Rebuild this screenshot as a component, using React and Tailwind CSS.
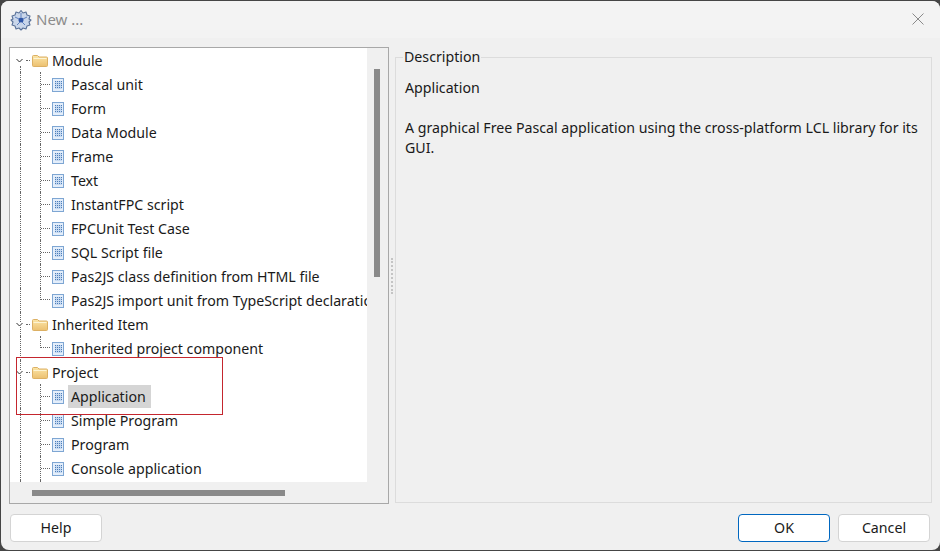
const font = { fontFamily: '"Noto Sans", "Open Sans", sans-serif' };

const FolderIcon = () => (
  <svg width="16" height="13" viewBox="0 0 16 13" className="shrink-0">
    <defs>
      <linearGradient id="folderFill" x1="0" y1="0" x2="0" y2="1">
        <stop offset="0" stopColor="#fbe6a8" />
        <stop offset="1" stopColor="#ecc070" />
      </linearGradient>
    </defs>
    <path d="M.5 2.5a1 1 0 0 1 1-1h4l1.5 1.5h7.5a1 1 0 0 1 1 1v7.5a1 1 0 0 1-1 1h-13a1 1 0 0 1-1-1z" fill="url(#folderFill)" stroke="#dcb064" />
    <path d="M1.5 4.5h13" stroke="#fdf4d3" />
  </svg>
);

const PageIcon = () => (
  <svg width="12" height="14" viewBox="0 0 12 14" className="mt-[1px] shrink-0">
    <rect x=".5" y=".5" width="11" height="13" fill="#e4eefa" stroke="#7ea6d3" />
    <rect x="3" y="3" width="7" height="8" fill="#c5d9f1" />
    {[3, 5, 7, 9].map((y) =>
      [3, 5, 7, 9].map((x) => <rect key={`${x}-${y}`} x={x} y={y} width="1" height="1" fill="#4d7db8" />)
    )}
  </svg>
);

const Chevron = () => (
  <svg width="7" height="5" viewBox="0 0 7 5" className="absolute left-[-4px] top-[10px] bg-white">
    <path d="M.5 1 3.5 4 6.5 1" fill="none" stroke="#333" />
  </svg>
);

const GroupRow = ({ label, first }) => (
  <div className="flex h-6 items-center">
    <div className="w-[10px] shrink-0" />
    <div className="relative flex h-full w-[12px] shrink-0 items-center">
      <div className={first ? "absolute left-0 top-[18px] h-[6px] border-l border-dotted border-[#666]" : "absolute left-0 top-0 h-full border-l border-dotted border-[#666]"} />
      <Chevron />
      <div className="ml-[6px] w-[4px] border-t border-dotted border-[#666]" />
    </div>
    <FolderIcon />
    <span className="ml-[4px] whitespace-nowrap pt-[1px]">{label}</span>
  </div>
);

const ItemRow = ({ label, last, selected }) => (
  <div className="flex h-6 items-center">
    <div className="w-[10px] shrink-0" />
    <div className="h-full w-[20px] shrink-0 border-l border-dotted border-[#666]" />
    <div className="flex h-full w-[12px] shrink-0 flex-col">
      <div className={last ? "h-1/2 w-[10px] border-b border-l border-dotted border-[#666]" : "flex h-full w-[10px] items-center border-l border-dotted border-[#666]"}>
        {!last && <div className="w-full border-t border-dotted border-[#666]" />}
      </div>
    </div>
    <PageIcon />
    <span className={selected ? "ml-[4px] flex h-[23px] items-center whitespace-nowrap bg-[#d5d5d5] pl-[3px] pr-[5px] pt-[1px]" : "ml-[4px] flex h-[23px] items-center whitespace-nowrap pl-[3px] pr-[2px] pt-[1px]"}>
      {label}
    </span>
  </div>
);

const Button = ({ children, primary }) => (
  <button className={primary ? "h-[28px] w-[92px] rounded-[4px] border border-[#0067c0] bg-white text-[14.2px] text-[#1a1a1a]" : "h-[28px] w-[92px] rounded-[4px] border border-[#d4d4d4] bg-white text-[14.2px] text-[#1a1a1a]"}>
    {children}
  </button>
);

export default function App() {
  return (
    <div style={font} className="relative h-[551px] w-[940px] overflow-hidden bg-[#454545] py-[1px] pl-[1px] text-[14.2px] text-[#1a1a1a]">
      <div className="flex h-full flex-col rounded-[8px] bg-[#f0f0f0]">
        <div className="flex h-[37px] shrink-0 items-center rounded-t-[8px] bg-[#f3f3f3] pl-[9px] pr-[15px]">
          <svg width="22" height="22" viewBox="0 0 22 22">
            <path d="M11 1.5l2 2.5 3-1 1 3 3 1-1 3 2 1-2 2 1 3-3 1-1 3-3-1-2 2-2-2-3 1-1-3-3-1 1-3-2-2 2-1-1-3 3-1 1-3 3 1z" fill="#c9d6ea" stroke="#5a7299" strokeWidth="1.1" strokeLinejoin="round" />
            <circle cx="11" cy="11" r="2.5" fill="#2f56a8" />
            <path d="M5 8l4 2M17 8l-4 2M11 4v4M7 16l3-3M15 16l-3-3" stroke="#5f80bd" />
          </svg>
          <span className="ml-[4px] text-[15px] text-[#8c8c8c]">New ...</span>
          <svg width="12" height="12" viewBox="0 0 12 12" className="mb-[1px] ml-auto mr-[1px]">
            <path d="M.5.5l11 11M11.5.5l-11 11" stroke="#8a8a8a" />
          </svg>
        </div>

        <div className="flex h-[466px] shrink-0 pl-[8px] pr-[8px] pt-[9px]">
          <div className="flex h-[457px] w-[380px] shrink-0 flex-col border border-[#a8a8a8] bg-white">
            <div className="flex h-[434px] shrink-0">
              <div className="min-w-0 flex-1 overflow-hidden">
                <GroupRow label="Module" first />
                <ItemRow label="Pascal unit" />
                <ItemRow label="Form" />
                <ItemRow label="Data Module" />
                <ItemRow label="Frame" />
                <ItemRow label="Text" />
                <ItemRow label="InstantFPC script" />
                <ItemRow label="FPCUnit Test Case" />
                <ItemRow label="SQL Script file" />
                <ItemRow label="Pas2JS class definition from HTML file" />
                <ItemRow label="Pas2JS import unit from TypeScript declaration file" last />
                <GroupRow label="Inherited Item" />
                <ItemRow label="Inherited project component" last />
                <GroupRow label="Project" />
                <ItemRow label="Application" selected />
                <ItemRow label="Simple Program" />
                <ItemRow label="Program" />
                <ItemRow label="Console application" />
                <ItemRow label="" />
              </div>
              <div className="w-[21px] shrink-0 bg-[#f0f0f0] pl-[7px] pt-[21px]">
                <div className="h-[208px] w-[6px] bg-[#8a8a8a]" />
              </div>
            </div>
            <div className="flex flex-1 items-center bg-[#f0f0f0] pl-[22px]">
              <div className="h-[6px] w-[253px] bg-[#8a8a8a]" />
            </div>
          </div>

          <div className="flex w-[6px] shrink-0 items-center justify-center">
            <div className="h-[36px] border-l-2 border-dotted border-[#c4c4c4]" />
          </div>

          <fieldset className="h-[456px] min-w-0 flex-1 border border-[#dcdcdc] pl-[9px] pr-[12px]">
            <legend className="-ml-[2px] px-[1px] leading-[20px]">Description</legend>
            <p className="mt-[11px] leading-5">Application</p>
            <p className="mt-[20px] leading-5">A graphical Free Pascal application using the cross-platform LCL library for its GUI.</p>
          </fieldset>
        </div>

        <div className="flex flex-1 items-start gap-2 pl-[9px] pr-[10px] pt-[10px]">
          <Button>Help</Button>
          <div className="flex-1" />
          <Button primary>OK</Button>
          <Button>Cancel</Button>
        </div>
      </div>

      <div className="absolute left-[16px] top-[357px] h-[58px] w-[207px] border border-[#c4262e]" />
    </div>
  );
}
